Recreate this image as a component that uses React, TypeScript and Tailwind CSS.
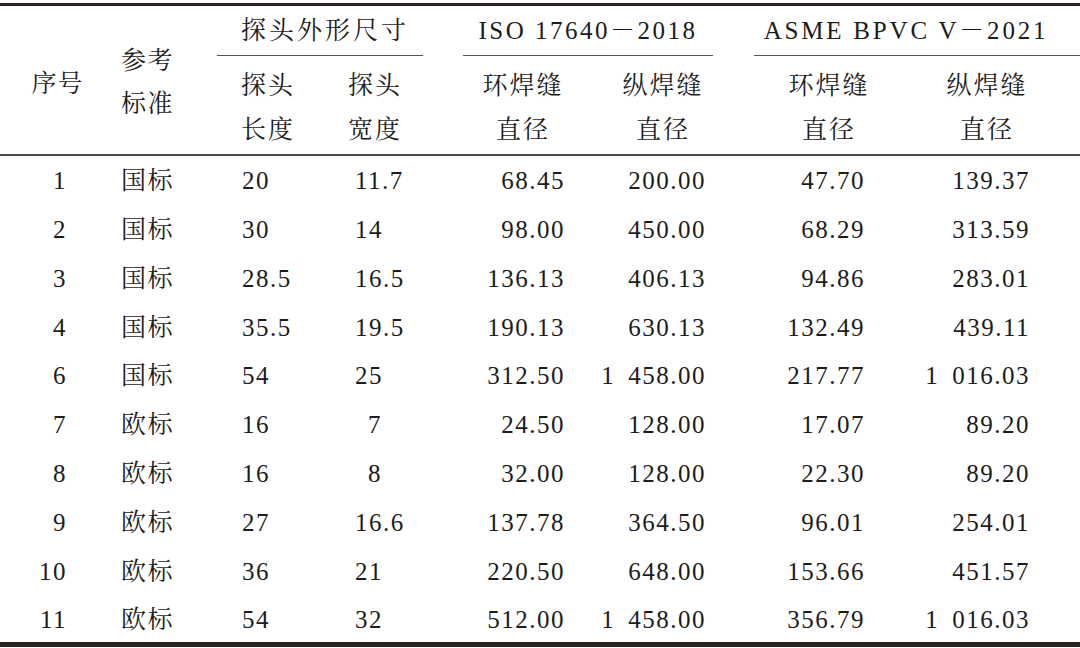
const cols = "grid grid-cols-[105px_112px_103px_123px_150px_140px_172px_175px]";

type Row = [string, string, string, string, string, string, string, string];

const rows: Row[] = [
  ["1", "国标", "20", "11.7", "68.45", "200.00", "47.70", "139.37"],
  ["2", "国标", "30", "14", "98.00", "450.00", "68.29", "313.59"],
  ["3", "国标", "28.5", "16.5", "136.13", "406.13", "94.86", "283.01"],
  ["4", "国标", "35.5", "19.5", "190.13", "630.13", "132.49", "439.11"],
  ["6", "国标", "54", "25", "312.50", "1 458.00", "217.77", "1 016.03"],
  ["7", "欧标", "16", "7", "24.50", "128.00", "17.07", "89.20"],
  ["8", "欧标", "16", "8", "32.00", "128.00", "22.30", "89.20"],
  ["9", "欧标", "27", "16.6", "137.78", "364.50", "96.01", "254.01"],
  ["10", "欧标", "36", "21", "220.50", "648.00", "153.66", "451.57"],
  ["11", "欧标", "54", "32", "512.00", "1 458.00", "356.79", "1 016.03"],
];

// thousands separated by a slightly wider gap, like the typeset original
function Num({ v, className }: { v: string; className: string }) {
  const [a, b] = v.split(" ");
  return (
    <span className={`text-right whitespace-nowrap ${className}`}>
      {b ? (
        <>
          <span className="mr-[13px]">{a}</span>
          {b}
        </>
      ) : (
        a
      )}
    </span>
  );
}

function Sub({ top, bottom, className }: { top: string; bottom: string; className: string }) {
  return (
    <div className={`flex flex-col pt-[8px] leading-[44px] tracking-[2px] ${className}`}>
      <span>{top}</span>
      <span>{bottom}</span>
    </div>
  );
}

export default function App() {
  return (
    <div
      className="w-[1080px] h-[648px] bg-white pt-[3px] text-[25px] text-[#1c1c1c] overflow-hidden"
      style={{ fontFamily: '"Liberation Serif", "Noto Serif CJK SC", "Noto Sans CJK SC", serif' }}
    >
      <div className="border-t-[3px] border-b-[5px] border-[#2a2322]">
        {/* header */}
        <div className={`${cols} grid-rows-[50px_98px] border-b-2 border-[#4d4d4d]`}>
          <div className="row-span-2 flex items-center justify-center pl-[10px] pt-[8px] tracking-[1px]">序号</div>
          <div className="row-span-2 flex flex-col justify-center pl-[16px] pt-[4px] leading-[43px] tracking-[1.5px]">
            <span>参考</span>
            <span>标准</span>
          </div>
          <div className="col-span-2 mr-[20px] flex items-center justify-center pl-[10px] border-b border-[#555] tracking-[3px]">
            探头外形尺寸
          </div>
          <div className="col-span-2 mx-[20px] flex items-center justify-center border-b border-[#555] tracking-[2.5px]">
            ISO 17640－2018
          </div>
          <div className="col-span-2 ml-[21px] flex items-center justify-center pr-[22px] border-b border-[#555] tracking-[2.8px]">
            ASME BPVC V－2021
          </div>
          <Sub top="探头" bottom="长度" className="pl-[24px]" />
          <Sub top="探头" bottom="宽度" className="pl-[28px]" />
          <Sub top="环焊缝" bottom="直径" className="items-center pl-[10px]" />
          <Sub top="纵焊缝" bottom="直径" className="items-center" />
          <Sub top="环焊缝" bottom="直径" className="items-center pl-[20px]" />
          <Sub top="纵焊缝" bottom="直径" className="items-center pr-[11px]" />
        </div>

        {/* body */}
        <div className="flex flex-col h-[486px] tracking-[1.5px]">
          {rows.map((r) => (
            <div key={r[0]} className={`${cols} h-[48.8px] shrink-0 items-center pt-[1px]`}>
              <span className="text-right pr-[38px]">{r[0]}</span>
              <span className="pl-[16px]">{r[1]}</span>
              <span className="pl-[25px]">{r[2]}</span>
              <span className={r[3].length === 1 ? "pl-[48px]" : "pl-[35px]"}>{r[3]}</span>
              <Num v={r[4]} className="pr-[28px]" />
              <Num v={r[5]} className="pr-[27px]" />
              <Num v={r[6]} className="pr-[40px]" />
              <Num v={r[7]} className="pr-[50px]" />
            </div>
          ))}
        </div>
      </div>
    </div>
  );
}
